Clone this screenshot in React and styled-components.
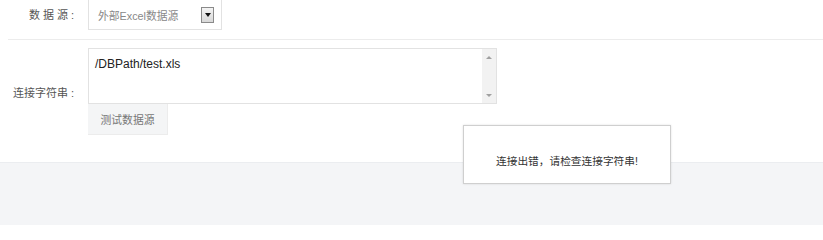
import React from "react";
import styled, { createGlobalStyle } from "styled-components";

const Global = createGlobalStyle`
  html, body { margin: 0; padding: 0; background: #fff; }
  body { font-family: "Liberation Sans", "Noto Sans CJK SC", sans-serif; font-size: 11px; color: #333; }
`;

const Page = styled.div`
  position: relative;
  width: 823px;
  height: 234px;
  overflow: hidden;
  background: #fff;
`;

const Row = styled.div`
  display: flex;
  align-items: ${(p) => p.$align || "center"};
  padding: ${(p) => p.$pad || "0"};
`;

const Label = styled.div`
  width: 80px;
  flex: none;
  display: flex;
  justify-content: flex-end;
  color: #555;
  font-size: 11px;
  line-height: 16px;
  white-space: pre;
  margin-top: ${(p) => p.$offset || "0"};
`;

const Colon = styled.span`
  width: 12px;
  padding-left: 3px;
  box-sizing: border-box;
  text-align: left;
`;

const Controls = styled.div`
  margin-left: 8px;
  display: flex;
  flex-direction: column;
  align-items: flex-start;
`;

const Select = styled.div`
  width: 134px;
  height: 31px;
  margin-top: -1px;
  border: 1px solid #e2e2e2;
  display: flex;
  align-items: center;
  justify-content: space-between;
  padding: 1px 7px 0 9px;
  box-sizing: border-box;
  color: #888;
  font-size: 10.8px;
`;

const DropButton = styled.div`
  width: 13px;
  height: 16px;
  box-sizing: border-box;
  border: 1px solid #8a8a8a;
  background: linear-gradient(#f4f4f4, #d8d8d8);
  display: flex;
  align-items: center;
  justify-content: center;
  &::after {
    content: "";
    border-left: 3.5px solid transparent;
    border-right: 3.5px solid transparent;
    border-top: 4px solid #111;
  }
`;

const Divider = styled.div`
  margin: 9px 0 0 8px;
  border-top: 1px solid #ececec;
`;

const TextBox = styled.div`
  width: 409px;
  height: 56px;
  box-sizing: border-box;
  border: 1px solid #e2e2e2;
  display: flex;
`;

const Area = styled.textarea`
  flex: 1;
  border: none;
  outline: none;
  resize: none;
  overflow: hidden;
  padding: 8px 6px;
  margin: 0;
  font-family: "Liberation Sans", "Noto Sans CJK SC", sans-serif;
  font-size: 12px;
  line-height: 14px;
  color: #222;
  background: #fff;
`;

const ScrollBar = styled.div`
  width: 14px;
  background: #f2f2f2;
  display: flex;
  flex-direction: column;
  justify-content: space-between;
  align-items: center;
  padding: 7px 0 6px;
`;

const Arrow = styled.span`
  width: 0;
  height: 0;
  border-left: 3px solid transparent;
  border-right: 3px solid transparent;
  ${(p) => (p.$up ? "border-bottom: 3px solid #a0a0a0;" : "border-top: 3px solid #a0a0a0;")}
`;

const TestButton = styled.button`
  width: 80px;
  height: 31px;
  border: none;
  border-right: 1px solid #ececec;
  border-bottom: 1px solid #ececec;
  background: #f4f5f6;
  color: #777;
  font-family: "Liberation Sans", "Noto Sans CJK SC", sans-serif;
  font-size: 10.8px;
  padding: 0;
  cursor: pointer;
`;

const Footer = styled.div`
  height: 62px;
  background: #f4f5f7;
  border-top: 1px solid #ebedf0;
`;

const Toast = styled.div`
  position: absolute;
  left: 463px;
  top: 125px;
  width: 208px;
  height: 59px;
  box-sizing: border-box;
  border: 1px solid #cfcfcf;
  background: #fff;
  box-shadow: 0 0 2px rgba(0, 0, 0, 0.12);
  display: flex;
  align-items: center;
  justify-content: center;
  padding-top: 11px;
  color: #333;
  font-size: 10.7px;
`;

export default function App() {
  return (
    <Page>
      <Global />
      <Row $align="flex-start">
        <Label $offset="7px">
          {"数 据 源"}
          <Colon>:</Colon>
        </Label>
        <Controls>
          <Select>
            <span>外部Excel数据源</span>
            <DropButton />
          </Select>
        </Controls>
      </Row>
      <Divider />
      <Row $pad="8px 0 27px 0">
        <Label $offset="3px">
          连接字符串
          <Colon>:</Colon>
        </Label>
        <Controls>
          <TextBox>
            <Area defaultValue="/DBPath/test.xls" />
            <ScrollBar>
              <Arrow $up />
              <Arrow />
            </ScrollBar>
          </TextBox>
          <TestButton>测试数据源</TestButton>
        </Controls>
      </Row>
      <Footer />
      <Toast>连接出错，请检查连接字符串!</Toast>
    </Page>
  );
}
